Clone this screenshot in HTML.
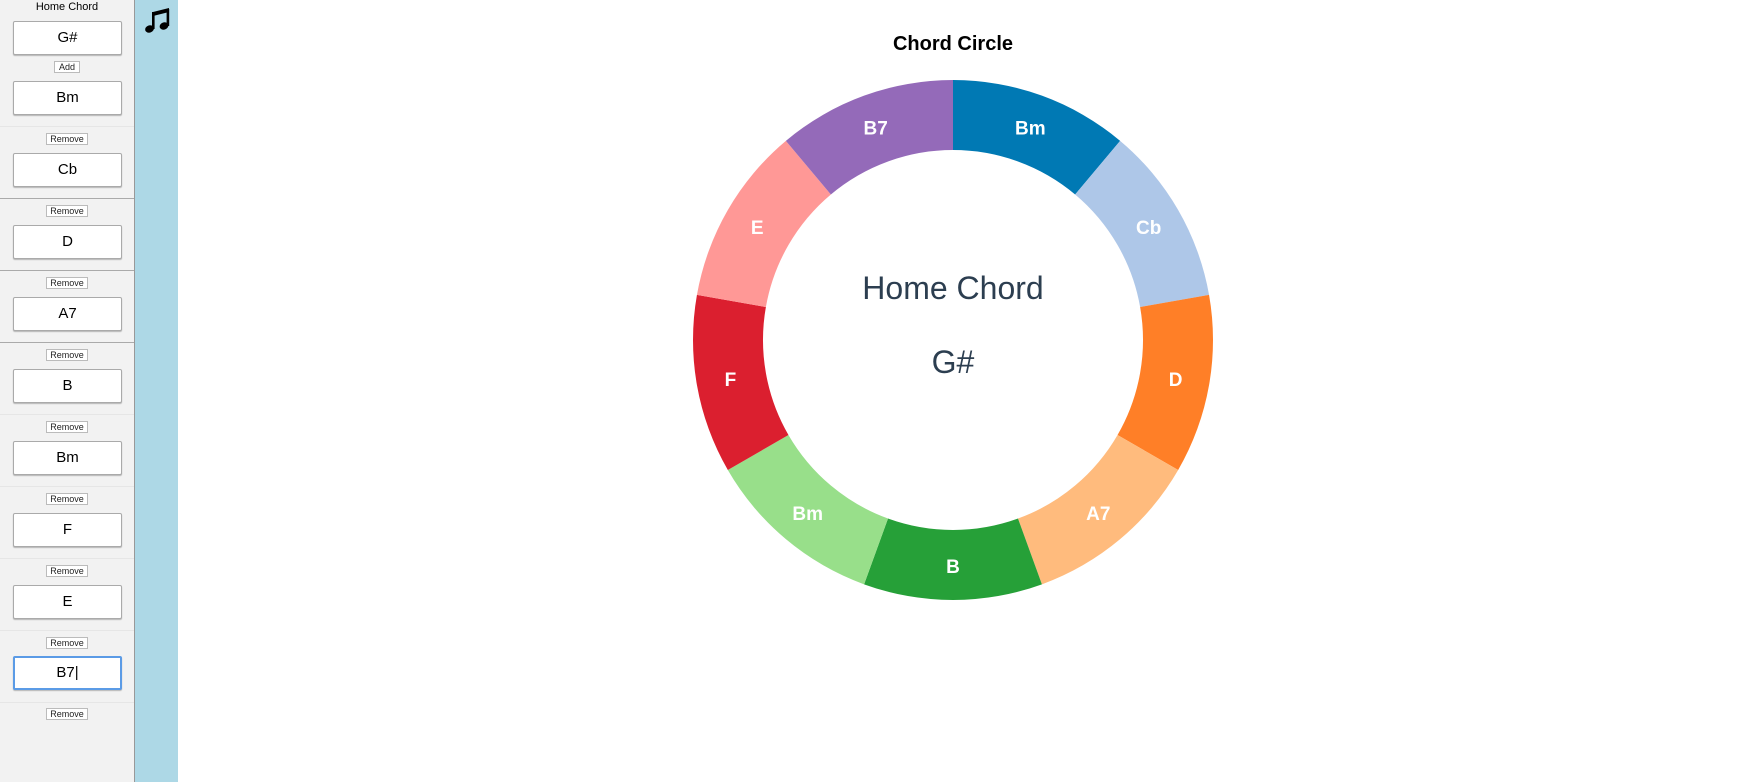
<!DOCTYPE html>
<html><head><meta charset="utf-8"><style>
*{margin:0;padding:0;box-sizing:border-box}
body{width:1740px;height:782px;position:relative;background:#fff;font-family:"Liberation Sans",sans-serif;overflow:hidden}
#side{position:absolute;left:0;top:0;width:135px;height:782px;background:#f2f2f2;border-right:1px solid #999}
#strip{position:absolute;left:135px;top:0;width:43px;height:782px;background:#add8e6}
.inp{position:absolute;left:13px;width:109px;height:34px;background:#fff;border:1px solid #aaa;border-radius:2px;box-shadow:0 1px 1px rgba(0,0,0,.25);font-size:15px;text-align:center;line-height:32px;color:#000}
.btn{position:absolute;left:46px;width:42px;height:12px;background:#fff;border:1px solid #bbb;font-size:9px;line-height:10px;text-align:center;color:#222}
.sep{position:absolute;left:0;width:134px;height:1px;background:#e6e6e6}
.sep.d{background:#aaa}
</style></head><body>
<div id="side">
<div style="position:absolute;top:1px;width:134px;text-align:center;font-size:11px">Home Chord</div>
<div class="inp" style="top:21px">G#</div>
<div class="btn" style="top:61px;left:54px;width:26px">Add</div>
<div class="inp" style="top:81px">Bm</div>
<div class="sep" style="top:126px"></div>
<div class="btn" style="top:133px">Remove</div>
<div class="inp" style="top:153px">Cb</div>
<div class="sep d" style="top:198px"></div>
<div class="btn" style="top:205px">Remove</div>
<div class="inp" style="top:225px">D</div>
<div class="sep d" style="top:270px"></div>
<div class="btn" style="top:277px">Remove</div>
<div class="inp" style="top:297px">A7</div>
<div class="sep d" style="top:342px"></div>
<div class="btn" style="top:349px">Remove</div>
<div class="inp" style="top:369px">B</div>
<div class="sep" style="top:414px"></div>
<div class="btn" style="top:421px">Remove</div>
<div class="inp" style="top:441px">Bm</div>
<div class="sep" style="top:486px"></div>
<div class="btn" style="top:493px">Remove</div>
<div class="inp" style="top:513px">F</div>
<div class="sep" style="top:558px"></div>
<div class="btn" style="top:565px">Remove</div>
<div class="inp" style="top:585px">E</div>
<div class="sep" style="top:630px"></div>
<div class="btn" style="top:637px">Remove</div>
<div class="inp" style="top:656px;border:2px solid #5b9be6;line-height:30px">B7<span style="font-weight:100">|</span></div>
<div class="sep" style="top:702px"></div>
<div class="btn" style="top:708px">Remove</div>
</div>
<div id="strip">
<svg width="30" height="30" viewBox="0 0 30 30" style="position:absolute;left:8px;top:6px">
<path d="M10 6 L26 2 L26 6 L10 10 Z" fill="#000"/>
<rect x="9" y="6" width="2.6" height="17" fill="#000"/>
<rect x="23.6" y="3" width="2.6" height="17" fill="#000"/>
<ellipse cx="6.5" cy="23" rx="4.5" ry="3.6" fill="#000" transform="rotate(-20 6.5 23)"/>
<ellipse cx="21" cy="20" rx="4.5" ry="3.6" fill="#000" transform="rotate(-20 21 20)"/>
</svg>
</div>
<div style="position:absolute;left:853px;width:200px;top:33px;text-align:center;font-weight:bold;font-size:20px">Chord Circle</div>
<svg width="1740" height="782" style="position:absolute;left:0;top:0" id="c"></svg>
<script>
var s=document.getElementById('c'),cx=953,cy=340,R=260,r=190;
var names=["Bm","Cb","D","A7","B","Bm","F","E","B7"];
var cols=["#0079b4","#aec7e8","#ff7f27","#ffbb7d","#26a038","#98df8a","#db1f2f","#ff9896","#946ab9"];
var h='';
function p(a,rad){return [cx+rad*Math.sin(a),cy-rad*Math.cos(a)];}
for(var i=0;i<9;i++){var a0=i*40*Math.PI/180,a1=(i+1)*40*Math.PI/180;
var A=p(a0,R),B=p(a1,R),C=p(a1,r),D=p(a0,r);
h+='<path d="M'+A+' A'+R+' '+R+' 0 0 1 '+B+' L'+C+' A'+r+' '+r+' 0 0 0 '+D+' Z" fill="'+cols[i]+'"/>';
var m=p((a0+a1)/2,226);
h+='<text x="'+m[0]+'" y="'+(m[1]+7)+'" text-anchor="middle" fill="#fff" font-weight="bold" font-size="19" font-family="Liberation Sans, sans-serif">'+names[i]+'</text>';}
h+='<text x="953" y="299" text-anchor="middle" fill="#2c3e50" font-size="32" font-family="Liberation Sans, sans-serif">Home Chord</text>';
h+='<text x="953" y="373" text-anchor="middle" fill="#2c3e50" font-size="32" font-family="Liberation Sans, sans-serif">G#</text>';
s.innerHTML=h;
</script>
</body></html>
